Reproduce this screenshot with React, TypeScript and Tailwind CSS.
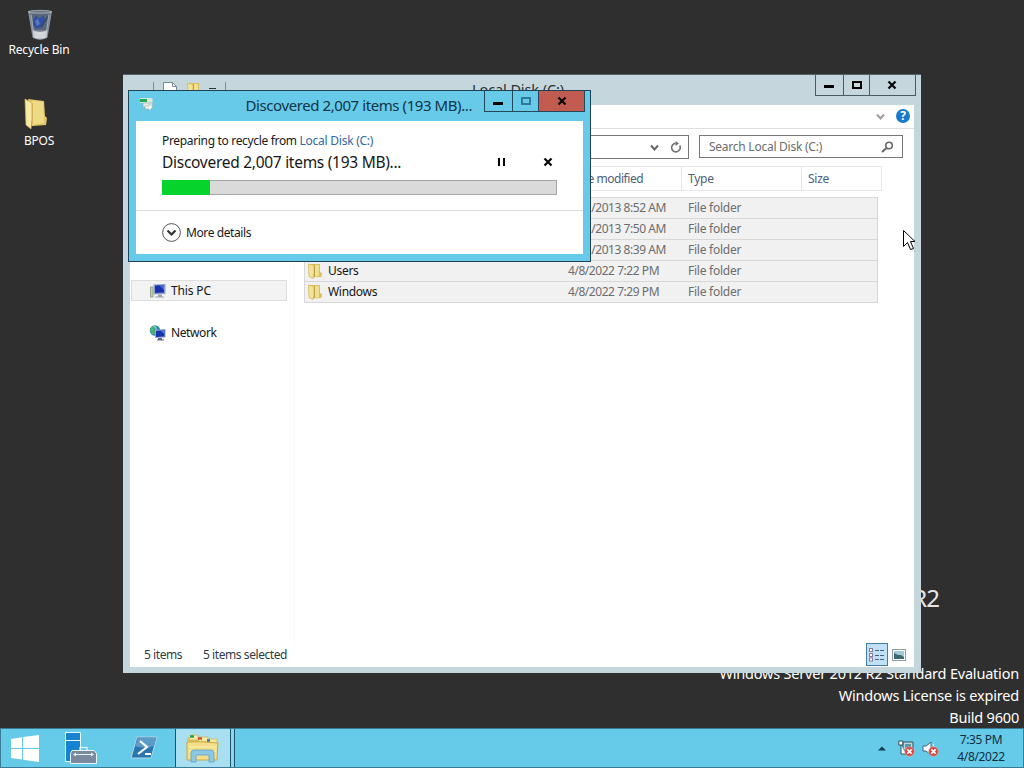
import type { ReactNode } from "react";

const folderRows = [
  { name: "PerfLogs", date: "8/22/2013 8:52 AM" },
  { name: "Program Files", date: "8/22/2013 7:50 AM" },
  { name: "Program Files (x86)", date: "8/22/2013 8:39 AM" },
  { name: "Users", date: "4/8/2022 7:22 PM" },
  { name: "Windows", date: "4/8/2022 7:29 PM" },
];

function RecycleBinIcon() {
  return (
    <svg width={26} height={32} viewBox="0 0 26 30" preserveAspectRatio="none" className="ml-px">
      <path d="M1 2 L25 2 L20.500 27 Q13 31 5.500 27 Z" fill="#858d96" />
      <path d="M3 4 L23 4 L20 20 H6 Z" fill="#59657b" />
      <path d="M6 10 l3-4 3 3 5-3 1 5-3 6-5 1-4-2Z" fill="#2f50a0" />
      <path d="M8 12l3-3 2 5-3 2Z" fill="#5678c0" />
      <path d="M14 17 L21 7" stroke="#3c4658" strokeWidth="1.500" />
      <path d="M5.500 20 Q13 23 20.500 20 L19.500 27 Q13 29 6.500 27Z" fill="#d5d8da" />
      <path d="M4 5 L7.500 27M22 5 L18.500 27" stroke="#b8c0c8" strokeWidth="1.200" opacity=".7" />
      <ellipse cx="13" cy="2.600" rx="11.800" ry="1.300" fill="#6b747e" stroke="#b3bac1" strokeWidth=".8" />
    </svg>
  );
}

function DesktopFolderIcon() {
  return (
    <svg width={24} height={32} viewBox="0 0 24 32" className="-mt-[4px] -ml-[6px]">
      <path d="M4 1 L20 3 L21 18 L23 20 L22 27 L8 28Z" fill="#e3c768" />
      <path d="M8 3 L19 4 L20 25 L8 27Z" fill="#efda86" />
      <path d="M1 1 L8 5 L8 20 L7 31 L2 27Z" fill="#f8e9a4" stroke="#d3b453" strokeWidth=".7" />
      <path d="M8.300 5V26" stroke="#c9a548" strokeWidth=".8" />
    </svg>
  );
}

function FolderIcon() {
  return (
    <svg width={16} height={16} viewBox="0 0 16 16" className="shrink-0">
      <path d="M3 1 L13 1 L13 9 L15 10 L14.500 14 L4 14.500Z" fill="#dcc05f" />
      <path d="M8 2 L12 2 V13 L8 14Z" fill="#f1e090" />
      <path d="M1.500 1 L7 2.500 V11 L6 15.500 L2 13.500Z" fill="#f3e398" stroke="#cfb350" strokeWidth=".7" />
      <path d="M7.500 2.500V14" stroke="#b99b42" strokeWidth=".9" />
    </svg>
  );
}

function PcIcon() {
  return (
    <svg width={18} height={16} viewBox="0 0 18 16" className="shrink-0">
      <rect x="1.500" y="4" width="2.500" height="10" fill="#c3cdb4" stroke="#8d9a83" strokeWidth=".8" />
      <path d="M4.500 1.500 L16.500 1 L16.500 11 L4.500 11.500Z" fill="#8fa0c4" />
      <path d="M6 2.500 L15 2 V9.500 L6 10Z" fill="#1a2fb0" />
      <path d="M10 2.300 L15 2 V7Z" fill="#466bdb" />
      <path d="M9 11.500h4v2h2v1H6v-1h3Z" fill="#96a5b6" />
    </svg>
  );
}

function NetworkIcon() {
  return (
    <svg width={18} height={16} viewBox="0 0 18 16" className="shrink-0">
      <circle cx="6" cy="5.500" r="5.200" fill="#2688ad" />
      <path d="M1 4 Q3 0 7 1 L5 5 L7 7 L5 10 Q1 9 1 4Z" fill="#4fb07a" />
      <path d="M5 1 Q8 2 7 5" stroke="#b9e2ec" fill="none" />
      <path d="M6 5 L16.500 4 V12.500 L6 13Z" fill="#93a3c8" />
      <path d="M7 6 L15.500 5 V11.500 L7 12Z" fill="#1935aa" />
      <path d="M11 5.500 L15.500 5V9Z" fill="#5179dd" />
      <path d="M9 13h4v1.500h2v1H8v-1h1Z" fill="#5a6b86" />
    </svg>
  );
}

function CloseGlyph() {
  return (
    <svg width={10} height={10} viewBox="0 0 10 10">
      <path d="M1.500 1.500 L8.500 8.500M8.500 1.500 L1.500 8.500" stroke="#080808" strokeWidth="2.200" />
    </svg>
  );
}

function Chevron({ className }: { className: string }) {
  return (
    <svg width={9} height={8} viewBox="0 0 9 8" className={className}>
      <path d="M1 1.500 L4.500 5.500 L8 1.500" fill="none" stroke="currentColor" strokeWidth="2" />
    </svg>
  );
}

function DesktopItem({ label, children }: { label: string; children: ReactNode }) {
  return (
    <div className="flex w-[78px] flex-col items-center text-[12px] leading-4 text-white">
      <div className="flex h-[35px] items-center">{children}</div>
      <span className="whitespace-nowrap">{label}</span>
    </div>
  );
}

function Explorer() {
  return (
    <section className="absolute left-[123px] top-[74px] flex h-[599px] w-[798px] flex-col border-t border-[#53616a] bg-[#c5d7dc] px-[7px] pb-[6px] text-[12px] tracking-[-0.25px]">
      <header className="relative flex h-[30px] shrink-0 justify-between">
        <div className="flex gap-[9px] pt-[7px] pl-[23px]">
          <span className="h-4 w-px bg-[#7e8d94]" />
          <svg width={14} height={16} viewBox="0 0 14 16">
            <path d="M.5.500h9l4 4v11H.500Z" fill="#fff" stroke="#788894" />
            <path d="M9.500.500v4h4" fill="none" stroke="#788894" />
          </svg>
          <FolderIcon />
          <span className="mt-[6px] -ml-[2px] h-px w-[7px] bg-[#25343b]" />
          <span className="h-4 w-px bg-[#7e8d94]" />
        </div>
        <h1 className="absolute left-[342px] top-[4px] text-[14.500px] leading-5 tracking-[-0.1px] text-[#273137]">Local Disk (C:)</h1>
        <div className="-mr-[2px] flex h-[21px] border-x border-b border-[#4d5960]">
          <div className="flex w-[28px] items-center justify-center border-r border-[#4d5960]">
            <span className="mt-[3px] mr-px h-[3px] w-[10px] bg-black" />
          </div>
          <div className="flex w-[26px] items-center justify-center border-r border-[#4d5960]">
            <span className="h-[8px] w-[10px] border-2 border-black" />
          </div>
          <div className="flex w-[45px] items-center justify-center pr-px">
            <CloseGlyph />
          </div>
        </div>
      </header>
      <div className="flex min-h-0 flex-1 flex-col bg-white">
        <div className="flex h-6 shrink-0 items-center justify-end gap-[11px] border-b border-[#dce0e4] pr-[4px] pb-px">
          <Chevron className="mt-[2px] text-[#9a9fa3]" />
          <span className="flex size-[14px] items-center justify-center rounded-full bg-[#1979ca] text-[12px] font-bold leading-none text-white">?</span>
        </div>
        <div className="flex h-[37px] shrink-0 items-start justify-end gap-[10px] pt-[6px] pr-[11px]">
          <div className="flex h-6 w-[385px] items-center justify-end gap-[11px] border border-[#777] pr-[6px]">
            <Chevron className="mt-px text-[#666]" />
            <svg width={12} height={12} viewBox="0 0 12 12" fill="none" stroke="#727272" strokeWidth="1.600">
              <path d="M9.700 4.500 A4.300 4.300 0 1 1 5.700 2.300" />
              <path d="M5.500 0 V5 L9 2.400Z" fill="#727272" stroke="none" />
            </svg>
          </div>
          <div className="flex h-[23px] w-[204px] items-center justify-between border border-[#777] pr-[8px] pl-[9px] text-[#6d6d6d]">
            <span>Search Local Disk (C:)</span>
            <svg width={13} height={12} viewBox="0 0 13 12" fill="none" stroke="#666">
              <circle cx="8" cy="4.500" r="3.300" strokeWidth="1.600" />
              <path d="M5.500 7 L1 11" strokeWidth="2" />
            </svg>
          </div>
        </div>
        <div className="flex min-h-0 flex-1">
          <nav className="flex w-[165px] flex-col border-r border-[#f8f9fa] pt-[114px] pl-px">
            <div className="flex h-[21px] w-[156px] items-center gap-[4px] border border-[#dedede] bg-[#f3f3f3] pl-[17px] tracking-[-0.15px] text-[#151515]">
              <PcIcon /> This PC
            </div>
            <div className="mt-[21px] flex h-[21px] items-center gap-[4px] pl-[18px] tracking-[-0.4px] text-[#151515]">
              <NetworkIcon /> Network
            </div>
          </nav>
          <main className="flex flex-col pl-[9px]">
            <div className="flex h-[25px] w-[578px] border-y border-r border-[#e5e7ea] text-[#4c607a]">
              <span className="w-[257px] pl-[5px] leading-[23px]">Name</span>
              <span className="w-[121px] border-r border-[#e1e4e8] pl-[8px] leading-[23px] tracking-[-0.45px]">Date modified</span>
              <span className="w-[120px] border-r border-[#e1e4e8] pl-[6px] leading-[23px]">Type</span>
              <span className="pl-[6px] leading-[23px]">Size</span>
            </div>
            <div className="mt-[6px] w-[574px] border-x border-t border-[#d8d8d8]">
              {folderRows.map((row) => (
                <div key={row.name} className="flex h-[21px] items-center border-b border-[#d8d8d8] bg-[#f1f1f1] text-[#6d6d6d]">
                  <span className="flex w-[263px] items-center gap-[5px] pl-[2px] tracking-[-0.3px] text-[#151515]">
                    <FolderIcon /> {row.name}
                  </span>
                  <span className="w-[120px] whitespace-nowrap tracking-[-0.45px]">{row.date}</span>
                  <span>File folder</span>
                </div>
              ))}
            </div>
          </main>
        </div>
        <footer className="flex h-6 shrink-0 items-center pr-[5px] pb-px pl-[14px] tracking-[-0.43px] text-[#303b43]">
          <span className="w-[59px]">5 items</span>
          <span>5 items selected</span>
          <div className="ml-auto flex items-center">
            <div className="flex h-[23px] w-[22px] items-center justify-center border border-[#457da5] bg-[#bfe1f6]">
              <svg width={16} height={14} viewBox="0 0 16 14">
                <g fill="#fff" stroke="#8a799c">
                  <rect x=".5" y=".5" width="3" height="3" />
                  <rect x=".5" y="5.500" width="3" height="3" />
                  <rect x=".5" y="10" width="3" height="3" />
                </g>
                <path d="M6 2.500h4M11 2.500h4M6 7.500h4M11 7.500h4M6 11.500h4M11 11.500h4" stroke="#4c607a" />
              </svg>
            </div>
            <svg width={21} height={12} viewBox="0 0 21 12">
              <rect x="4.500" y=".5" width="13" height="11" fill="#fff" stroke="#8e9ca6" />
              <rect x="6" y="2" width="10" height="8" fill="#a4cad8" />
              <path d="M6 4 L10 6 L13 6 L16 8 V10 H6Z" fill="#3e6870" />
            </svg>
          </div>
        </footer>
      </div>
    </section>
  );
}

function ProgressDialog() {
  return (
    <section className="absolute left-[128px] top-[90px] flex h-[172px] w-[463px] flex-col border border-[#1e4354] bg-[#66cae8] px-[7px] pb-[7px]">
      <header className="flex h-[30px] shrink-0 justify-between">
        <svg width={14} height={13} viewBox="0 0 14 13" className="mt-[7px] ml-[4px]">
          <rect x="0" y="0" width="12.500" height="5" fill="#d9e6df" />
          <rect x="0" y="1" width="7" height="3" fill="#20aa56" />
          <rect x="3" y="5" width="9.500" height="4" fill="#e4eae6" stroke="#8da6a9" strokeWidth=".5" />
          <path d="M5 8h4V5.500l4 3.500-4 4v-2H5Z" fill="#f0f5ee" stroke="#90aaa5" strokeWidth=".5" />
        </svg>
        <h2 className="ml-auto pr-[12px] text-[15px] leading-[29px] tracking-[-0.42px] text-[#123447]">Discovered 2,007 items (193 MB)...</h2>
        <div className="-mr-[2px] flex h-[21px] border-x border-b border-[#24485a]">
          <div className="flex w-[28px] items-center justify-center border-r border-[#24485a]">
            <span className="mt-[4px] mr-px h-[3px] w-[10px] bg-black" />
          </div>
          <div className="flex w-[26px] items-center justify-center border-r border-[#24485a]">
            <span className="h-[8px] w-[10px] border-2 border-[#2e7c99]" />
          </div>
          <div className="flex w-[45px] items-center justify-center bg-[#c25c50]">
            <CloseGlyph />
          </div>
        </div>
      </header>
      <div className="flex flex-1 flex-col bg-white">
        <div className="h-[90px] border-b border-[#dcdcdc] pt-[12px] pr-[26px] pl-[26px]">
          <p className="text-[12px] leading-4 tracking-[-0.33px] text-[#181818]">
            Preparing to recycle from <span className="tracking-[-0.25px] text-[#3069a8]">Local Disk (C:)</span>
          </p>
          <div className="flex h-[26px] items-center">
            <p className="text-[15.500px] leading-6 tracking-[-0.28px] text-[#171717]">Discovered 2,007 items (193 MB)...</p>
            <div className="mr-[4px] ml-auto flex items-center gap-[38px]">
              <svg width={8} height={8} viewBox="0 0 8 8">
                <path d="M2 0v8M7 0v8" stroke="#000" strokeWidth="2" />
              </svg>
              <CloseGlyph />
            </div>
          </div>
          <div className="mt-[5px] h-[15px] border border-[#a5a5a5] bg-[#dadada]">
            <div className="-mt-px -ml-px h-[15px] w-[48px] bg-[#06d42d]" />
          </div>
        </div>
        <div className="flex flex-1 items-center gap-[5px] pl-[26px] text-[12px] tracking-[-0.4px] text-[#181818]">
          <svg width={19} height={19} viewBox="0 0 19 19" fill="none">
            <circle cx="9.500" cy="9.500" r="8.900" stroke="#555" />
            <path d="M5.500 7.500 L9.500 11.500 L13.500 7.500" stroke="#333" strokeWidth="2.200" />
          </svg>
          More details
        </div>
      </div>
    </section>
  );
}

function Taskbar() {
  return (
    <footer className="flex h-10 shrink-0 border border-[#397b96] bg-[#66cae9]">
      <div className="flex w-[48px] items-center justify-center">
        <svg width={28} height={27} viewBox="0 0 28 27" fill="#fff">
          <path d="M0 4 L11 2.300V13H0ZM12 2.100 L28 0V13H12ZM0 14H11V24.500L0 23ZM12 14H28V27L12 24.700Z" />
        </svg>
      </div>
      <div className="flex w-[63px] items-center justify-center">
        <svg width={32} height={32} viewBox="0 0 32 32" fill="none" stroke="#e9f6fb">
          <path d="M.5.500h15v29H.500Z" fill="#1683d0" />
          <path d="M.5 8.500h15" />
          <path d="M15 18v-2.500h7v2.500" strokeWidth="1.200" />
          <path d="M7 18.500h22l2.500 3v10h-26v-10Z" fill="#7b899f" />
          <path d="M9 22.500h19" />
          <path d="M11 20.500l-3 2 3 2ZM26 20.500l3 2-3 2Z" fill="#e9f6fb" stroke="none" />
        </svg>
      </div>
      <div className="flex w-[63px] items-center justify-center">
        <svg width={28} height={24} viewBox="0 0 28 24">
          <path d="M7 1H27L21 22H1Z" fill="#2a76ae" stroke="#b1d7e8" />
          <path d="M8 2H26L24 10Q15 13 5 10Z" fill="#5b9dc8" />
          <path d="M10 5l7 6-9 7M15 18h6" fill="none" stroke="#fff" strokeWidth="2.200" />
        </svg>
      </div>
      <div className="flex w-[55px] items-center justify-center border-l border-[#1d5369] bg-[#a8e0f2]">
        <svg width={34} height={29} viewBox="0 0 34 29">
          <path d="M2 3h13l2 3h14v20H1V5Z" fill="#dfc26b" />
          <path d="M4 1h8v5H4M13 3h9v5h-9M22 5h9v5h-9" fill="#f9e99f" stroke="#ceb05a" strokeWidth=".7" />
          <path d="M1 8 Q15 7 32 9L31 26H1Z" fill="#f3df8b" stroke="#c5a846" />
          <path d="M3 13H30M3 17H30" stroke="#fff0ac" />
          <path d="M5 28V19q0-3 3-3h17q3 0 3 3v9h-5v-6q0-1-1-1H11q-1 0-1 1v6Z" fill="#8cc8e5" stroke="#5b9fc8" strokeWidth=".8" />
          <path d="M4 2.500h4" stroke="#28a154" strokeWidth="2.500" />
          <path d="M12 4.500h4" stroke="#c45346" strokeWidth="2.500" />
          <path d="M21 6.500h3" stroke="#3478b6" strokeWidth="2.500" />
        </svg>
      </div>
      <div className="w-[5px] border-x border-[#1d5369] bg-[#8cd6ee]" />
      <div className="ml-auto flex items-center text-[12px] tracking-[-0.35px] text-[#102f40]">
        <svg width={8} height={5} viewBox="0 0 8 5">
          <path d="M0 4.500 4 .5 8 4.500Z" fill="#123b4d" />
        </svg>
        <svg width={17} height={17} viewBox="0 0 17 17" className="ml-[12px]">
          <path d="M5 2h10v8H5Z" fill="#b8d5d9" stroke="#31535d" />
          <path d="M7 4h6v4H7Z" fill="#5799a9" />
          <path d="M.8 1h4v4h-4ZM3 5v9h5" fill="#fff" stroke="#31535d" />
          <circle cx="11.500" cy="11.500" r="4.800" fill="#d8463f" stroke="#e9b0a8" strokeWidth=".6" />
          <path d="M9.300 9.300l4.400 4.400m0-4.400l-4.400 4.400" stroke="#fff" strokeWidth="1.700" />
        </svg>
        <svg width={17} height={17} viewBox="0 0 17 17" className="ml-[7px]">
          <path d="M1 6h3l5-4v13l-5-4H1Z" fill="#f7fbfc" stroke="#426776" />
          <path d="M11 4q3 4 0 9" fill="none" stroke="#f7fbfc" />
          <circle cx="11.500" cy="11.500" r="4.800" fill="#d8463f" stroke="#e9b0a8" strokeWidth=".6" />
          <path d="M9.300 9.300l4.400 4.400m0-4.400l-4.400 4.400" stroke="#fff" strokeWidth="1.700" />
        </svg>
        <div className="w-[84px] text-center leading-[17px]">
          <p>7:35 PM</p>
          <p>4/8/2022</p>
        </div>
      </div>
    </footer>
  );
}

export default function App() {
  return (
    <div className="flex h-[768px] w-[1024px] flex-col overflow-hidden bg-[#2f2f2f] font-['Noto_Sans','Open_Sans',sans-serif]">
      <div className="relative flex min-h-0 flex-1 justify-between">
        <div className="flex flex-col gap-[40px] pt-[7px] tracking-[-0.2px]">
          <DesktopItem label="Recycle Bin">
            <RecycleBinIcon />
          </DesktopItem>
          <DesktopItem label="BPOS">
            <DesktopFolderIcon />
          </DesktopItem>
        </div>
        <div className="flex flex-col justify-end pr-[5px] text-right text-white">
          <p className="mr-[80px] mb-[47px] text-[24px] leading-[34px] tracking-[-1px] text-[#e6e6e6]">Windows Server 2012 R2</p>
          <div className="text-[14.500px] leading-[22px] tracking-[-0.2px]">
            <p>Windows Server 2012 R2 Standard Evaluation</p>
            <p>Windows License is expired</p>
            <p>Build 9600</p>
          </div>
        </div>
        <Explorer />
        <ProgressDialog />
        <svg width={12} height={21} viewBox="0 0 12 21" className="absolute left-[903px] top-[230px]">
          <path d="M.5.500v16l4-4 3 7 3-1-3-7h4.500Z" fill="#fff" stroke="#000" />
        </svg>
      </div>
      <Taskbar />
    </div>
  );
}
